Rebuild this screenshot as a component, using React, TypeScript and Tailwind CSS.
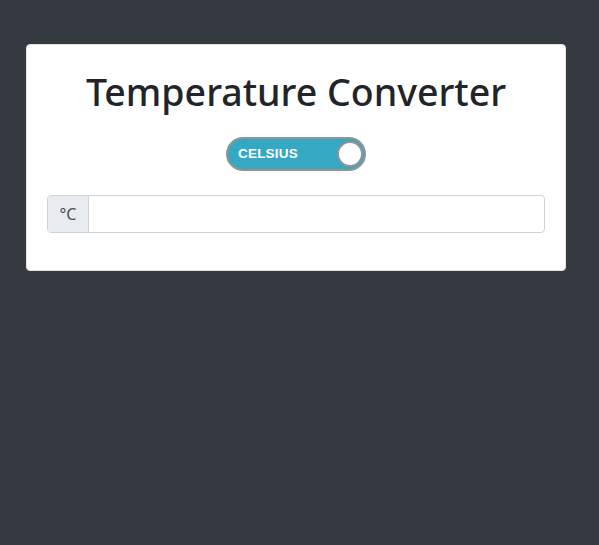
export default function App() {
    return (
        <div className="min-h-[545px] w-full bg-[#343a40] pt-[44px] px-[26px]" style={{ fontFamily: '"Noto Sans", "Open Sans", sans-serif' }}>
            <div className="w-[540px] rounded-[4px] bg-white border border-[#dee2e6] px-[20px] pt-[23px] pb-[37px]">
                <h1 className="text-center text-[37.5px] leading-[48px] font-medium text-[#212529]">
                    Temperature Converter
                </h1>

                <div className="flex justify-center mt-[21px]">
                    <div className="relative w-[140px] h-[34px] rounded-full bg-[#35a8c3] border-2 border-[#939393] flex items-center pl-[10px]">
                        <span
                            className="text-white text-[13.5px] font-bold tracking-[0.2px] pt-[1px]"
                            style={{ fontFamily: '"Liberation Sans", Arial, sans-serif' }}
                        >
                            CELSIUS
                        </span>
                        <div className="absolute right-[1px] top-[2px] w-[26px] h-[26px] rounded-full bg-white border-2 border-[#939393]" />
                    </div>
                </div>

                <div className="mt-[24px] flex h-[38px] rounded-[4px] border border-[#ced4da] overflow-hidden">
                    <div className="w-[41px] flex items-center justify-center bg-[#e9ecef] border-r border-[#ced4da] text-[#495057] text-[16px]">
                        °C
                    </div>
                    <input className="flex-1 outline-none px-3 text-[#495057]" />
                </div>
            </div>
        </div>
    );
}
